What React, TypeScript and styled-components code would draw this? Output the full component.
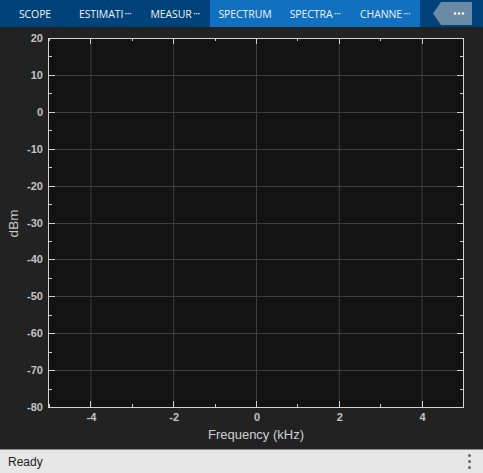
import styled, { createGlobalStyle } from 'styled-components';

const GlobalStyle = createGlobalStyle`
  html, body {
    margin: 0;
    padding: 0;
    background: #222222;
  }
  #root {
    width: 483px;
    height: 473px;
  }
`;

const tabs = [
  { label: 'SCOPE', more: false, active: false },
  { label: 'ESTIMATI', more: true, active: false },
  { label: 'MEASUR', more: true, active: false },
  { label: 'SPECTRUM', more: false, active: true },
  { label: 'SPECTRA', more: true, active: true },
  { label: 'CHANNE', more: true, active: true },
];

// axis setup
const PX0 = 49;
const PX1 = 463;
const PY0 = 11;
const PY1 = 380;
const xOf = (v: number) => PX0 + ((v + 5) / 10) * (PX1 - PX0);
const yOf = (v: number) => PY0 + ((20 - v) / 100) * (PY1 - PY0);

const yMajors = [20, 10, 0, -10, -20, -30, -40, -50, -60, -70, -80];
const yMinors = [15, 5, -5, -15, -25, -35, -45, -55, -65, -75];
const xMajors = [-4, -2, 0, 2, 4];
const xMinors = [-5, -3, -1, 1, 3, 5];

const Chart = () => (
  <ChartSvg width={483} height={422} viewBox="0 0 483 422">
    <rect x={PX0} y={PY0} width={PX1 - PX0} height={PY1 - PY0} fill="#131313" />
    {xMajors.map((v) => (
      <line key={`gx${v}`} x1={xOf(v) + 0.5} x2={xOf(v) + 0.5} y1={PY0} y2={PY1} stroke="#3f3f3f" />
    ))}
    {yMajors.map((v) => (
      <line key={`gy${v}`} x1={PX0} x2={PX1} y1={Math.round(yOf(v)) + 0.5} y2={Math.round(yOf(v)) + 0.5} stroke="#3f3f3f" />
    ))}
    {/* ticks */}
    {yMajors.map((v) => {
      const y = Math.round(yOf(v)) + 0.5;
      return (
        <g key={`ty${v}`} stroke="#cfcfcf">
          <line x1={PX0} x2={PX0 + 6} y1={y} y2={y} />
          <line x1={PX1 - 6} x2={PX1} y1={y} y2={y} />
        </g>
      );
    })}
    {yMinors.map((v) => {
      const y = Math.round(yOf(v)) + 0.5;
      return (
        <g key={`my${v}`} stroke="#cfcfcf">
          <line x1={PX0} x2={PX0 + 3} y1={y} y2={y} />
          <line x1={PX1 - 3} x2={PX1} y1={y} y2={y} />
        </g>
      );
    })}
    {xMajors.map((v) => {
      const x = Math.round(xOf(v)) + 0.5;
      return (
        <g key={`tx${v}`} stroke="#cfcfcf">
          <line x1={x} x2={x} y1={PY0} y2={PY0 + 6} />
          <line x1={x} x2={x} y1={PY1 - 6} y2={PY1} />
        </g>
      );
    })}
    {xMinors.map((v) => {
      const x = Math.round(xOf(v)) + 0.5;
      return (
        <g key={`mx${v}`} stroke="#cfcfcf">
          <line x1={x} x2={x} y1={PY0} y2={PY0 + 3} />
          <line x1={x} x2={x} y1={PY1 - 3} y2={PY1} />
        </g>
      );
    })}
    <rect x={PX0 - 0.5} y={PY0 + 0.5} width={PX1 - PX0 + 1} height={PY1 - PY0} fill="none" stroke="#d4d4d4" />
    {yMajors.map((v) => (
      <TickText key={`ly${v}`} x={PX0 - 6} y={yOf(v) + 4} textAnchor="end">
        {v}
      </TickText>
    ))}
    {xMajors.map((v) => (
      <TickText key={`lx${v}`} x={xOf(v) + 1} y={PY1 + 14} textAnchor="middle">
        {v}
      </TickText>
    ))}
    <AxisLabel x={256} y={412} textAnchor="middle">
      Frequency (kHz)
    </AxisLabel>
    <YLabel x={0} y={0} textAnchor="middle" transform={`translate(18 ${(PY0 + PY1) / 2 + 1}) rotate(-90)`}>
      dBm
    </YLabel>
  </ChartSvg>
);

const App = () => {
  return (
    <Page>
      <GlobalStyle />
      <Toolbar>
        {tabs.map((t) => (
          <Tab key={t.label} active={t.active}>
            {t.label}
            {t.more && <More>···</More>}
          </Tab>
        ))}
        <Spacer />
        <OverflowButton>
          <svg width="40" height="23" viewBox="0 0 40 23">
            <polygon points="8,0 39,0 39,23 8,23 0,11.5" fill="#6b8aa6" />
            <circle cx="22" cy="11.5" r="1.3" fill="#ffffff" />
            <circle cx="26" cy="11.5" r="1.3" fill="#ffffff" />
            <circle cx="30" cy="11.5" r="1.3" fill="#ffffff" />
          </svg>
        </OverflowButton>
      </Toolbar>
      <Main>
        <Chart />
      </Main>
      <StatusBar>
        <StatusText>Ready</StatusText>
        <Grip>
          <Dot />
          <Dot />
          <Dot />
        </Grip>
      </StatusBar>
    </Page>
  );
};

const Page = styled.div`
  width: 483px;
  height: 473px;
  display: flex;
  flex-direction: column;
  background: #222222;
  overflow: hidden;
`;
const Toolbar = styled.div`
  height: 27px;
  display: flex;
  align-items: stretch;
  background: #00427a;
  flex-shrink: 0;
`;
const Tab = styled.div<{ active: boolean }>`
  width: 70px;
  display: flex;
  align-items: center;
  justify-content: center;
  background: ${(p) => (p.active ? '#1170c0' : 'transparent')};
  color: #eef3f8;
  font-family: 'Open Sans', 'Noto Sans', sans-serif;
  font-size: 10.5px;
  letter-spacing: -0.1px;
  white-space: nowrap;
`;
const More = styled.span`
  font-family: 'DejaVu Sans', sans-serif;
  font-size: 10px;
  letter-spacing: -0.9px;
  margin-left: 1px;
`;
const Spacer = styled.div`
  flex: 1;
`;
const OverflowButton = styled.div`
  display: flex;
  align-items: center;
  padding-right: 10px;
`;
const Main = styled.div`
  flex: 1;
  background: #222222;
  position: relative;
`;
const ChartSvg = styled.svg`
  display: block;
`;
const TickText = styled.text`
  font-family: 'Liberation Sans', Arial, sans-serif;
  font-size: 11px;
  font-weight: bold;
  fill: #c4c4c4;
`;
const AxisLabel = styled.text`
  font-family: 'Liberation Sans', Arial, sans-serif;
  font-size: 13px;
  fill: #d0d0d0;
`;
const YLabel = styled.text`
  font-family: 'Liberation Sans', Arial, sans-serif;
  font-size: 13.5px;
  fill: #c8c8c8;
`;
const StatusBar = styled.div`
  height: 23px;
  flex-shrink: 0;
  border-top: 1px solid #8a8a8a;
  background: #e6e6e6;
  display: flex;
  align-items: center;
  justify-content: space-between;
  padding: 0 12px 0 8px;
`;
const StatusText = styled.span`
  font-family: 'Liberation Sans', Arial, sans-serif;
  font-size: 12px;
  color: #222222;
`;
const Grip = styled.div`
  display: flex;
  flex-direction: column;
  gap: 3px;
`;
const Dot = styled.div`
  width: 3px;
  height: 3px;
  border-radius: 50%;
  background: #666666;
`;

export default App;
